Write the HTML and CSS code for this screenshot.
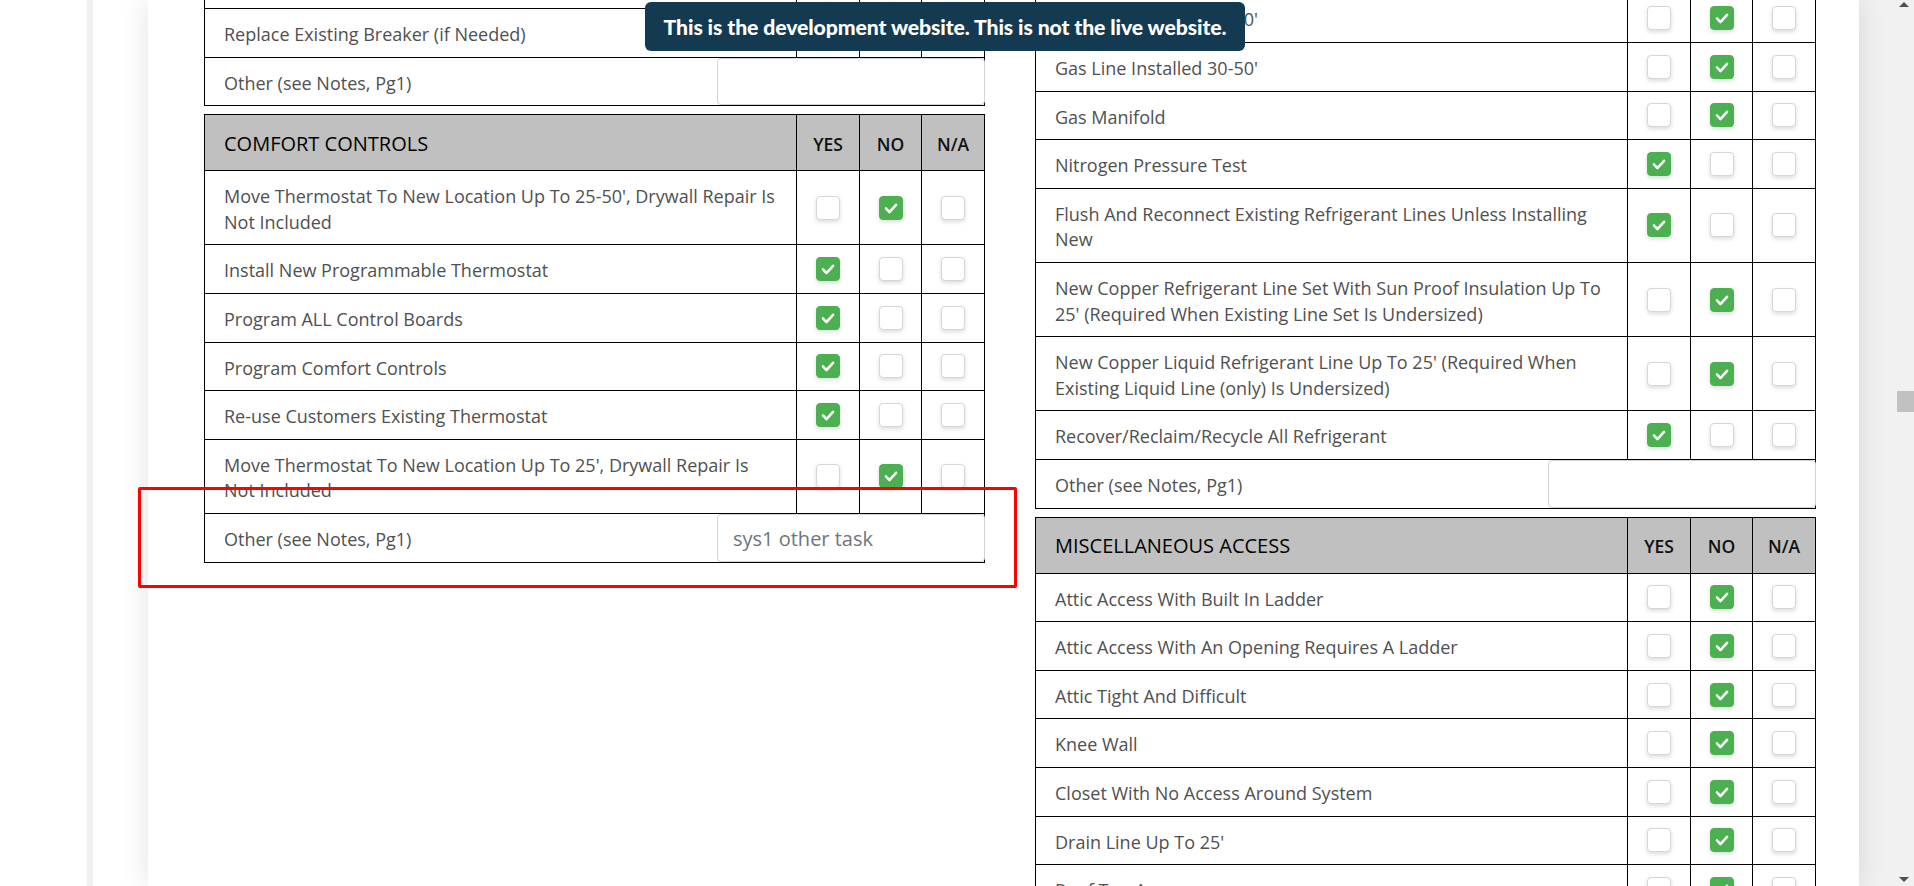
FILE: index.html
```html
<!DOCTYPE html>
<html lang="en">
<head>
<meta charset="utf-8">
<title>Checklist</title>
<link rel="stylesheet" href="styles.css">
</head>
<body>
<div class="screen">
  <div class="page">
    <div class="rail-white"></div>
    <div class="rail-strip"></div>
    <div class="rail-gap"></div>
    <main class="card">
      <div class="columns">
        <div class="col col-left">
          <section class="tbl">
            <div class="row"><div class="label">Upgrade Existing Breaker Panel</div><div class="cell"><span class="cb"></span></div><div class="cell"><span class="cb on"><svg viewBox="0 0 24 24"><path d="M6.5 12.5l3.8 4 7.2-8"/></svg></span></div><div class="cell"><span class="cb"></span></div></div>
            <div class="row"><div class="label">Replace Existing Breaker (if Needed)</div><div class="cell"><span class="cb"></span></div><div class="cell"><span class="cb on"><svg viewBox="0 0 24 24"><path d="M6.5 12.5l3.8 4 7.2-8"/></svg></span></div><div class="cell"><span class="cb"></span></div></div>
            <div class="row row-other"><div class="label">Other (see Notes, Pg1)</div><input class="other-input" type="text" value=""></div>
          </section>
          <section class="tbl tbl-gap">
            <div class="row head"><div class="label">COMFORT CONTROLS</div><div class="cell">YES</div><div class="cell">NO</div><div class="cell">N/A</div></div>
            <div class="row"><div class="label">Move Thermostat To New Location Up To 25-50', Drywall Repair Is Not Included</div><div class="cell"><span class="cb"></span></div><div class="cell"><span class="cb on"><svg viewBox="0 0 24 24"><path d="M6.5 12.5l3.8 4 7.2-8"/></svg></span></div><div class="cell"><span class="cb"></span></div></div>
            <div class="row"><div class="label">Install New Programmable Thermostat</div><div class="cell"><span class="cb on"><svg viewBox="0 0 24 24"><path d="M6.5 12.5l3.8 4 7.2-8"/></svg></span></div><div class="cell"><span class="cb"></span></div><div class="cell"><span class="cb"></span></div></div>
            <div class="row"><div class="label">Program ALL Control Boards</div><div class="cell"><span class="cb on"><svg viewBox="0 0 24 24"><path d="M6.5 12.5l3.8 4 7.2-8"/></svg></span></div><div class="cell"><span class="cb"></span></div><div class="cell"><span class="cb"></span></div></div>
            <div class="row"><div class="label">Program Comfort Controls</div><div class="cell"><span class="cb on"><svg viewBox="0 0 24 24"><path d="M6.5 12.5l3.8 4 7.2-8"/></svg></span></div><div class="cell"><span class="cb"></span></div><div class="cell"><span class="cb"></span></div></div>
            <div class="row"><div class="label">Re-use Customers Existing Thermostat</div><div class="cell"><span class="cb on"><svg viewBox="0 0 24 24"><path d="M6.5 12.5l3.8 4 7.2-8"/></svg></span></div><div class="cell"><span class="cb"></span></div><div class="cell"><span class="cb"></span></div></div>
            <div class="row"><div class="label">Move Thermostat To New Location Up To 25', Drywall Repair Is Not Included</div><div class="cell"><span class="cb"></span></div><div class="cell"><span class="cb on"><svg viewBox="0 0 24 24"><path d="M6.5 12.5l3.8 4 7.2-8"/></svg></span></div><div class="cell"><span class="cb"></span></div></div>
            <div class="row row-other"><div class="label">Other (see Notes, Pg1)</div><input class="other-input" type="text" value="sys1 other task"></div>
          </section>
        </div>
        <div class="col col-right">
          <section class="tbl">
            <div class="row"><div class="label">Gas Line Installed 10-30'</div><div class="cell"><span class="cb"></span></div><div class="cell"><span class="cb on"><svg viewBox="0 0 24 24"><path d="M6.5 12.5l3.8 4 7.2-8"/></svg></span></div><div class="cell"><span class="cb"></span></div></div>
            <div class="row"><div class="label">Gas Line Installed 30-50'</div><div class="cell"><span class="cb"></span></div><div class="cell"><span class="cb on"><svg viewBox="0 0 24 24"><path d="M6.5 12.5l3.8 4 7.2-8"/></svg></span></div><div class="cell"><span class="cb"></span></div></div>
            <div class="row"><div class="label">Gas Manifold</div><div class="cell"><span class="cb"></span></div><div class="cell"><span class="cb on"><svg viewBox="0 0 24 24"><path d="M6.5 12.5l3.8 4 7.2-8"/></svg></span></div><div class="cell"><span class="cb"></span></div></div>
            <div class="row"><div class="label">Nitrogen Pressure Test</div><div class="cell"><span class="cb on"><svg viewBox="0 0 24 24"><path d="M6.5 12.5l3.8 4 7.2-8"/></svg></span></div><div class="cell"><span class="cb"></span></div><div class="cell"><span class="cb"></span></div></div>
            <div class="row"><div class="label">Flush And Reconnect Existing Refrigerant Lines Unless Installing New</div><div class="cell"><span class="cb on"><svg viewBox="0 0 24 24"><path d="M6.5 12.5l3.8 4 7.2-8"/></svg></span></div><div class="cell"><span class="cb"></span></div><div class="cell"><span class="cb"></span></div></div>
            <div class="row"><div class="label">New Copper Refrigerant Line Set With Sun Proof Insulation Up To 25' (Required When Existing Line Set Is Undersized)</div><div class="cell"><span class="cb"></span></div><div class="cell"><span class="cb on"><svg viewBox="0 0 24 24"><path d="M6.5 12.5l3.8 4 7.2-8"/></svg></span></div><div class="cell"><span class="cb"></span></div></div>
            <div class="row"><div class="label">New Copper Liquid Refrigerant Line Up To 25' (Required When Existing Liquid Line (only) Is Undersized)</div><div class="cell"><span class="cb"></span></div><div class="cell"><span class="cb on"><svg viewBox="0 0 24 24"><path d="M6.5 12.5l3.8 4 7.2-8"/></svg></span></div><div class="cell"><span class="cb"></span></div></div>
            <div class="row"><div class="label">Recover/Reclaim/Recycle All Refrigerant</div><div class="cell"><span class="cb on"><svg viewBox="0 0 24 24"><path d="M6.5 12.5l3.8 4 7.2-8"/></svg></span></div><div class="cell"><span class="cb"></span></div><div class="cell"><span class="cb"></span></div></div>
            <div class="row row-other"><div class="label">Other (see Notes, Pg1)</div><input class="other-input" type="text" value=""></div>
          </section>
          <section class="tbl tbl-gap">
            <div class="row head"><div class="label">MISCELLANEOUS ACCESS</div><div class="cell">YES</div><div class="cell">NO</div><div class="cell">N/A</div></div>
            <div class="row"><div class="label">Attic Access With Built In Ladder</div><div class="cell"><span class="cb"></span></div><div class="cell"><span class="cb on"><svg viewBox="0 0 24 24"><path d="M6.5 12.5l3.8 4 7.2-8"/></svg></span></div><div class="cell"><span class="cb"></span></div></div>
            <div class="row"><div class="label">Attic Access With An Opening Requires A Ladder</div><div class="cell"><span class="cb"></span></div><div class="cell"><span class="cb on"><svg viewBox="0 0 24 24"><path d="M6.5 12.5l3.8 4 7.2-8"/></svg></span></div><div class="cell"><span class="cb"></span></div></div>
            <div class="row"><div class="label">Attic Tight And Difficult</div><div class="cell"><span class="cb"></span></div><div class="cell"><span class="cb on"><svg viewBox="0 0 24 24"><path d="M6.5 12.5l3.8 4 7.2-8"/></svg></span></div><div class="cell"><span class="cb"></span></div></div>
            <div class="row"><div class="label">Knee Wall</div><div class="cell"><span class="cb"></span></div><div class="cell"><span class="cb on"><svg viewBox="0 0 24 24"><path d="M6.5 12.5l3.8 4 7.2-8"/></svg></span></div><div class="cell"><span class="cb"></span></div></div>
            <div class="row"><div class="label">Closet With No Access Around System</div><div class="cell"><span class="cb"></span></div><div class="cell"><span class="cb on"><svg viewBox="0 0 24 24"><path d="M6.5 12.5l3.8 4 7.2-8"/></svg></span></div><div class="cell"><span class="cb"></span></div></div>
            <div class="row"><div class="label">Drain Line Up To 25'</div><div class="cell"><span class="cb"></span></div><div class="cell"><span class="cb on"><svg viewBox="0 0 24 24"><path d="M6.5 12.5l3.8 4 7.2-8"/></svg></span></div><div class="cell"><span class="cb"></span></div></div>
            <div class="row"><div class="label">Roof Top Access</div><div class="cell"><span class="cb"></span></div><div class="cell"><span class="cb on"><svg viewBox="0 0 24 24"><path d="M6.5 12.5l3.8 4 7.2-8"/></svg></span></div><div class="cell"><span class="cb"></span></div></div>
          </section>
        </div>
      </div>
    </main>
    <div class="rail-right"></div>
  </div>
  <div class="scrollbar">
    <div class="sb-arrow sb-up"></div>
    <div class="sb-track"><div class="sb-thumb"></div></div>
    <div class="sb-arrow sb-down"></div>
  </div>
  <div class="dev-banner">This is the development website. This is not the live website.</div>
  <div class="annotation"></div>
</div>
</body>
</html>
```
FILE: styles.css
```css
* { box-sizing: border-box; }
html, body { margin: 0; padding: 0; background: #fff; }
body { overflow: hidden; font-family: "Open Sans", "Noto Sans", sans-serif; }

.screen {
  position: relative;
  display: flex;
  width: 1914px;
  height: 886px;
  overflow: hidden;
}

.page {
  flex: 1;
  display: flex;
  height: 886px;
}

.rail-white { width: 87px; background: #fff; }
.rail-strip { width: 6px; background: #f0f0f0; }
.rail-gap { width: 55px; background: #fff; }
.rail-right { width: 35px; background: #f1f1f1; }

.card {
  position: relative;
  z-index: 1;
  flex: 1;
  background: #fff;
  box-shadow: 0 0 26px rgba(20, 40, 60, 0.13);
  padding-left: 56px;
  overflow: hidden;
}

.columns {
  display: flex;
  align-items: flex-start;
  gap: 50px;
}

.col { width: 781px; }
.col-left { margin-top: -39.6px; }
.col-right { margin-top: -5.6px; }

.tbl-gap { margin-top: 8px; }

.row {
  display: grid;
  grid-template-columns: 591px 63px 62px 63px;
  border-left: 1px solid #000;
  border-right: 1px solid #000;
  border-bottom: 1px solid #000;
}

.label {
  padding: 13px 19px 9px 19px;
  font-size: 18px;
  line-height: 25.6px;
  color: #505050;
}

.cell {
  border-left: 1px solid #000;
  display: flex;
  align-items: center;
  justify-content: center;
}

.head {
  border-top: 1px solid #000;
  background: #c0c0c0;
  height: 57px;
}
.head .label {
  display: flex;
  align-items: center;
  padding-top: 2px;
  padding-bottom: 0;
  font-size: 20px;
  color: #000;
}
.head .cell {
  padding-top: 2px;
  font-size: 17.5px;
  font-weight: 600;
  color: #111;
}

.cb {
  display: block;
  width: 24px;
  height: 24px;
  border: 1px solid #d6d6d6;
  border-radius: 4px;
  background: #fff;
  box-shadow: 0 2px 4px rgba(0, 0, 0, 0.14);
}
.cb.on {
  background: #4caf50;
  border-color: #4caf50;
}
.cb svg {
  display: block;
  width: 22px;
  height: 22px;
}
.cb svg path {
  fill: none;
  stroke: #fff;
  stroke-width: 2.8;
  stroke-linecap: round;
  stroke-linejoin: round;
}

.row-other {
  display: flex;
}
.row-other .label { flex: 1; }
.other-input {
  width: 268px;
  margin: 0 -1px 0 0;
  align-self: stretch;
  height: auto;
  border: 1px solid #ced4da;
  border-radius: 4px;
  padding: 2px 15px 0 15px;
  font-family: "Open Sans", "Noto Sans", sans-serif;
  font-size: 20px;
  color: #6c757d;
  background: #fff;
  outline: none;
}

.scrollbar {
  width: 20px;
  height: 886px;
  background: #f1f1f1;
  display: flex;
  flex-direction: column;
  align-items: center;
}
.sb-arrow {
  width: 0;
  height: 0;
  border-left: 5px solid transparent;
  border-right: 5px solid transparent;
}
.sb-up { border-bottom: 5px solid #505050; margin-top: 2px; }
.sb-down { border-top: 5px solid #505050; margin-bottom: 4px; }
.sb-track {
  flex: 1;
  width: 100%;
  padding-top: 384px;
  display: flex;
  justify-content: center;
}
.sb-thumb {
  width: 17px;
  height: 21px;
  margin-left: 3px;
  background: #c1c1c1;
}

.dev-banner {
  position: absolute;
  left: 645px;
  top: 2px;
  width: 600px;
  height: 49px;
  background: #133a50;
  border-radius: 6px;
  color: #fff;
  font-family: "Lato", "Nunito", sans-serif;
  font-weight: 900;
  font-size: 21.2px;
  letter-spacing: -0.1px;
  display: flex;
  align-items: center;
  justify-content: center;
  padding-top: 1px;
  z-index: 5;
}

.annotation {
  position: absolute;
  left: 138px;
  top: 487px;
  width: 879px;
  height: 101px;
  border: 3px solid #ff0000;
  border-radius: 2px;
  z-index: 4;
}
```
